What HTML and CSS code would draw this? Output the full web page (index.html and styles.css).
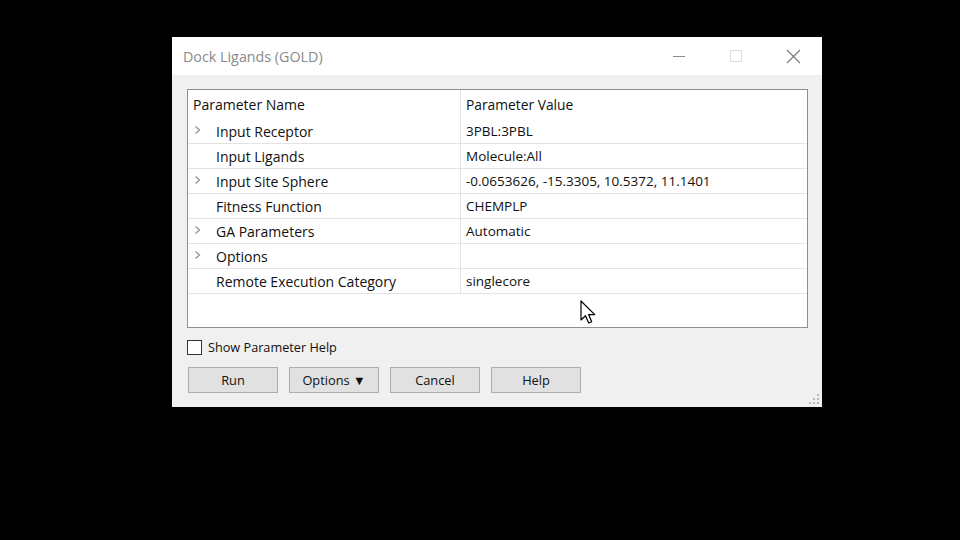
FILE: index.html
```html
<!DOCTYPE html>
<html>
<head>
<meta charset="utf-8">
<link rel="stylesheet" href="styles.css">
</head>
<body>
<div class="screen">
  <div class="window">
    <div class="titlebar">
      <span class="title">Dock Ligands (GOLD)</span>
      <div class="controls">
        <span class="ctl"><svg width="14" height="14" viewBox="0 0 14 14"><path d="M1 7.5h12" stroke="#8a8a8a" stroke-width="1"/></svg></span>
        <span class="ctl"><svg width="14" height="14" viewBox="0 0 14 14"><rect x="1.5" y="1.5" width="11" height="11" fill="none" stroke="#dcdcdc" stroke-width="1"/></svg></span>
        <span class="ctl"><svg width="15" height="15" viewBox="0 0 15 15"><path d="M1 1l13 13M14 1l-13 13" stroke="#777" stroke-width="1.1"/></svg></span>
      </div>
    </div>
    <div class="body">
      <div class="tree">
        <div class="row header">
          <div class="cell name">Parameter Name</div>
          <div class="cell value">Parameter Value</div>
        </div>
        <div class="row">
          <div class="cell name"><span class="arrow"><svg width="7" height="10" viewBox="0 0 7 10"><path d="M1.5 1.5l4 3.5-4 3.5" fill="none" stroke="#999" stroke-width="1.4"/></svg></span><span class="label">Input Receptor</span></div>
          <div class="cell value">3PBL:3PBL</div>
        </div>
        <div class="row">
          <div class="cell name"><span class="arrow"></span><span class="label">Input Ligands</span></div>
          <div class="cell value">Molecule:All</div>
        </div>
        <div class="row">
          <div class="cell name"><span class="arrow"><svg width="7" height="10" viewBox="0 0 7 10"><path d="M1.5 1.5l4 3.5-4 3.5" fill="none" stroke="#999" stroke-width="1.4"/></svg></span><span class="label">Input Site Sphere</span></div>
          <div class="cell value">-0.0653626, -15.3305, 10.5372, 11.1401</div>
        </div>
        <div class="row">
          <div class="cell name"><span class="arrow"></span><span class="label">Fitness Function</span></div>
          <div class="cell value">CHEMPLP</div>
        </div>
        <div class="row">
          <div class="cell name"><span class="arrow"><svg width="7" height="10" viewBox="0 0 7 10"><path d="M1.5 1.5l4 3.5-4 3.5" fill="none" stroke="#999" stroke-width="1.4"/></svg></span><span class="label">GA Parameters</span></div>
          <div class="cell value">Automatic</div>
        </div>
        <div class="row">
          <div class="cell name"><span class="arrow"><svg width="7" height="10" viewBox="0 0 7 10"><path d="M1.5 1.5l4 3.5-4 3.5" fill="none" stroke="#999" stroke-width="1.4"/></svg></span><span class="label">Options</span></div>
          <div class="cell value"></div>
        </div>
        <div class="row">
          <div class="cell name"><span class="arrow"></span><span class="label">Remote Execution Category</span></div>
          <div class="cell value">singlecore</div>
        </div>
        <svg class="cursor" width="16" height="26" viewBox="0 0 16 26"><path d="M1 1v19l4.5-4.3 3.2 7.3 3-1.3-3.1-7.1h6.2z" fill="#fff" stroke="#000" stroke-width="1.2" stroke-linejoin="round"/></svg>
      </div>
      <label class="check"><span class="box"></span><span>Show Parameter Help</span></label>
      <div class="buttons">
        <button class="btn">Run</button>
        <button class="btn">Options &#x25BC;</button>
        <button class="btn">Cancel</button>
        <button class="btn">Help</button>
      </div>
      <svg class="grip" width="10" height="10" viewBox="0 0 10 10"><g fill="#b8b8b8"><rect x="8" y="0" width="2" height="2"/><rect x="4" y="4" width="2" height="2"/><rect x="8" y="4" width="2" height="2"/><rect x="0" y="8" width="2" height="2"/><rect x="4" y="8" width="2" height="2"/><rect x="8" y="8" width="2" height="2"/></g></svg>
    </div>
  </div>
</div>
</body>
</html>
```
FILE: styles.css
```css
html, body {
  margin: 0;
  padding: 0;
  background: #000;
}
.screen {
  width: 960px;
  height: 540px;
  background: #000;
  padding-top: 37px;
  padding-left: 172px;
  box-sizing: border-box;
  font-family: "Open Sans", "Noto Sans", sans-serif;
  font-size: 13.5px;
  color: #111;
}
.window {
  width: 650px;
  height: 370px;
  background: #f0f0f0;
  display: flex;
  flex-direction: column;
}
.titlebar {
  height: 38px;
  background: #fff;
  display: flex;
  align-items: center;
  justify-content: space-between;
  padding-left: 11px;
}
.title {
  color: #8a8a8a;
  font-size: 14.3px;
}
.controls {
  display: flex;
  height: 38px;
}
.ctl {
  width: 57px;
  display: flex;
  align-items: center;
  justify-content: center;
}
.ctl:last-child {
  width: 58px;
}
.body {
  flex: 1;
  position: relative;
  padding: 14px 14px 0 15px;
}
.tree {
  position: relative;
  height: 239px;
  background: #fff;
  border: 1px solid #8f8f8f;
  box-sizing: border-box;
}
.row {
  display: flex;
  height: 25px;
  border-bottom: 1px solid #e3e3e3;
  box-sizing: border-box;
}
.row.header {
  height: 29px;
  border-bottom: none;
}
.cell {
  display: flex;
  align-items: center;
  white-space: nowrap;
}
.cell.name {
  width: 273px;
  box-sizing: border-box;
  border-right: 1px solid #e3e3e3;
  padding-left: 5px;
  font-size: 14px;
}
.cell.value {
  padding-left: 5px;
}
.header .cell.value {
  font-size: 13.8px;
}
.arrow {
  width: 23px;
  height: 25px;
  padding-left: 1px;
  padding-top: 6px;
  box-sizing: border-box;
  display: flex;
  align-items: flex-start;
}
.cursor {
  position: absolute;
  left: 392px;
  top: 210px;
}
.check {
  display: flex;
  align-items: center;
  gap: 6px;
  margin-top: 11px;
  height: 16px;
  font-size: 12.7px;
}
.box {
  width: 13px;
  height: 13px;
  border: 1px solid #333;
  background: #fff;
}
.buttons {
  display: flex;
  gap: 11px;
  margin-top: 12px;
  padding-left: 1px;
}
.btn {
  width: 90px;
  height: 26px;
  background: #e1e1e1;
  border: 1px solid #adadad;
  font-family: inherit;
  font-size: 12.8px;
  color: #111;
  padding: 0;
}
.grip {
  position: absolute;
  right: 3px;
  bottom: 3px;
}
```
